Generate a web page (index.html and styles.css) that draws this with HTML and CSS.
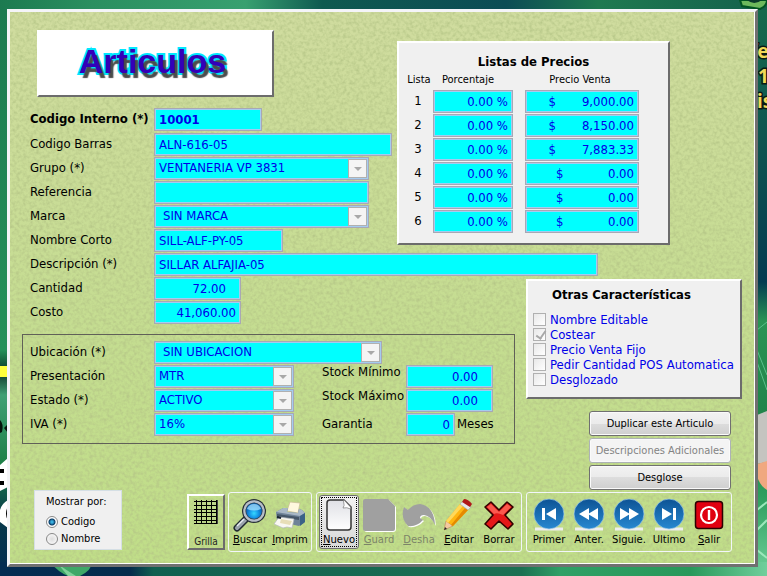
FILE: index.html
```html
<!DOCTYPE html>
<html lang="es">
<head>
<meta charset="utf-8">
<title>Articulos</title>
<link rel="stylesheet" href="styles.css">
</head>
<body>
<svg class="wallpaper" viewBox="0 0 767 576" preserveAspectRatio="none" aria-hidden="true">
  <defs>
    <linearGradient id="top" x1="0" x2="1"><stop offset="0" stop-color="#1c7a50"/><stop offset=".12" stop-color="#2a8f60"/><stop offset=".32" stop-color="#38a070"/><stop offset=".42" stop-color="#0f5a50"/><stop offset=".66" stop-color="#0c4c55"/><stop offset=".78" stop-color="#1f7a50"/><stop offset="1" stop-color="#14604c"/></linearGradient>
    <linearGradient id="left" x1="0" x2="0" y1="0" y2="1"><stop offset="0" stop-color="#1c7a50"/><stop offset=".6" stop-color="#25915a"/><stop offset=".64" stop-color="#0c3528"/><stop offset=".68" stop-color="#40a075"/><stop offset=".8" stop-color="#1f8048"/><stop offset=".9" stop-color="#06384a"/><stop offset="1" stop-color="#042c52"/></linearGradient>
    <linearGradient id="right" x1="0" x2="0" y1="0" y2="1"><stop offset="0" stop-color="#166a4c"/><stop offset=".2" stop-color="#0f5850"/><stop offset=".48" stop-color="#033a50"/><stop offset=".55" stop-color="#2a9455"/><stop offset=".75" stop-color="#1e8048"/><stop offset=".86" stop-color="#2f9f60"/><stop offset="1" stop-color="#6fd09a"/></linearGradient>
    <linearGradient id="bottom" x1="0" x2="1"><stop offset="0" stop-color="#042c52"/><stop offset=".17" stop-color="#052c4c"/><stop offset=".2" stop-color="#106050"/><stop offset=".68" stop-color="#1c7052"/><stop offset=".73" stop-color="#2fa066"/><stop offset=".9" stop-color="#28985a"/><stop offset="1" stop-color="#70cf9c"/></linearGradient>
  </defs>
  <rect width="767" height="576" fill="url(#top)"/>
  <rect y="10" width="10" height="566" fill="url(#left)"/>
  <rect x="750" y="10" width="17" height="566" fill="url(#right)"/>
  <rect y="562" width="767" height="14" fill="url(#bottom)"/>
  <path d="M50 562 H92 Q92 570 80 576 H68 Q58 572 50 562Z" fill="#3fa868"/>
  <path d="M58 564 Q66 570 76 576 H68Z" fill="#7fd09a"/>
  <path d="M740 0 L742 6 L760 9 Q767 6 767 0Z" fill="#6cb85c" stroke="#052" stroke-width="2"/>
  <path d="M747 0 Q754 6 762 0Z" fill="#0a3a2c"/>
  <rect y="366" width="10" height="11" fill="#ffff3c"/>
  <path d="M0 420 Q4 424 2 432 L0 433Z M4 428 L8 424 V433Z" fill="#05130c"/>
  <path d="M8 458 L0 465 V491 L8 487Z M8 500 Q-3 506 0 522 L8 528Z" fill="#fff"/>
  <path d="M0 469 H4 V473 H0Z M0 481 H4 V485 H0Z M8 506 Q4 514 8 521Z" fill="#000"/>
  <path d="M757 415 L767 411 V462 L757 464Z" fill="#c4c4c0"/>
  <path d="M757 464 L767 461 V490 Q760 486 757 476Z" fill="#f0a880"/>
  <path d="M757 350 L767 375 M757 362 L767 390 M757 330 L767 322" fill="none" stroke="#5cc08c"/>
  <path d="M757 510 L767 502 M757 530 L767 520 M757 550 L767 558" fill="none" stroke="#9be8bb" stroke-width="2"/>
  <g class="wallpaper-text"><text x="750" y="58">fe</text><text x="758" y="83">1</text><text x="757" y="108">is</text></g>
</svg>

<main class="window">
  <svg class="texture" aria-hidden="true">
    <filter id="paper" x="0" y="0" width="100%" height="100%">
      <feTurbulence type="fractalNoise" baseFrequency=".3" numOctaves="2" seed="7"/>
      <feColorMatrix values="0 0 0 0 .46  0 0 0 0 .56  0 0 0 0 .24  1.8 0 0 0 -.68"/>
    </filter>
    <rect width="100%" height="100%" filter="url(#paper)"/>
  </svg>

  <form class="content">
    <section class="upper">
      <div class="fields">
        <header class="title raised"><h1>Articulos</h1></header>
        <div class="row strong"><label for="codigo">Codigo Interno (*)</label><input id="codigo" class="box w-code" value="10001" readonly></div>
        <div class="row"><label for="barras">Codigo Barras</label><input id="barras" class="box w-bar" value="ALN-616-05" readonly></div>
        <div class="row"><label for="grupo">Grupo (*)</label><span class="pick w-group"><select id="grupo" class="box" disabled><option>VENTANERIA VP 3831</option></select></span></div>
        <div class="row"><label for="ref">Referencia</label><input id="ref" class="box w-group" value="" readonly></div>
        <div class="row"><label for="marca">Marca</label><span class="pick w-group"><select id="marca" class="box indent" disabled><option>SIN MARCA</option></select></span></div>
        <div class="row"><label for="corto">Nombre Corto</label><input id="corto" class="box w-short" value="SILL-ALF-PY-05" readonly></div>
      </div>
      <section class="prices raised">
        <h2>Listas de Precios</h2>
        <table>
          <thead><tr><th>Lista</th><th>Porcentaje</th><th>Precio Venta</th></tr></thead>
          <tbody>
            <tr><td>1</td><td><input class="box num" aria-label="Porcentaje 1" value="0.00 %" readonly></td><td><input class="box num" aria-label="Precio Venta 1" value="$       9,000.00" readonly></td></tr>
            <tr><td>2</td><td><input class="box num" aria-label="Porcentaje 2" value="0.00 %" readonly></td><td><input class="box num" aria-label="Precio Venta 2" value="$       8,150.00" readonly></td></tr>
            <tr><td>3</td><td><input class="box num" aria-label="Porcentaje 3" value="0.00 %" readonly></td><td><input class="box num" aria-label="Precio Venta 3" value="$       7,883.33" readonly></td></tr>
            <tr><td>4</td><td><input class="box num" aria-label="Porcentaje 4" value="0.00 %" readonly></td><td><input class="box num" aria-label="Precio Venta 4" value="$            0.00" readonly></td></tr>
            <tr><td>5</td><td><input class="box num" aria-label="Porcentaje 5" value="0.00 %" readonly></td><td><input class="box num" aria-label="Precio Venta 5" value="$            0.00" readonly></td></tr>
            <tr><td>6</td><td><input class="box num" aria-label="Porcentaje 6" value="0.00 %" readonly></td><td><input class="box num" aria-label="Precio Venta 6" value="$            0.00" readonly></td></tr>
          </tbody>
        </table>
      </section>
    </section>

    <div class="row inset"><label for="desc">Descripción (*)</label><input id="desc" class="box w-desc" value="SILLAR ALFAJIA-05" readonly></div>

    <section class="lower">
      <div class="lower-left">
        <div class="row inset"><label for="cant">Cantidad</label><input id="cant" class="box num spaced w-num" value="72.00" readonly></div>
        <div class="row inset"><label for="costo">Costo</label><input id="costo" class="box num w-num" value="41,060.00" readonly></div>
        <div class="frame">
          <div class="row"><label for="ubic">Ubicación (*)</label><span class="pick w-place"><select id="ubic" class="box indent" disabled><option>SIN UBICACION</option></select></span></div>
          <div class="frame-columns">
            <div>
              <div class="row"><label for="pres">Presentación</label><span class="pick w-pick"><select id="pres" class="box" disabled><option>MTR</option></select></span></div>
              <div class="row"><label for="estado">Estado (*)</label><span class="pick w-pick"><select id="estado" class="box" disabled><option>ACTIVO</option></select></span></div>
              <div class="row"><label for="iva">IVA (*)</label><span class="pick w-pick"><select id="iva" class="box" disabled><option>16%</option></select></span></div>
            </div>
            <div class="stock">
              <div class="row high"><label for="smin">Stock Mínimo</label><input id="smin" class="box num spaced w-num" value="0.00" readonly></div>
              <div class="row high"><label for="smax">Stock Máximo</label><input id="smax" class="box num spaced w-num" value="0.00" readonly></div>
              <div class="row"><label for="gar">Garantia</label><input id="gar" class="box num w-months" value="0" readonly><span class="unit">Meses</span></div>
            </div>
          </div>
        </div>
      </div>
      <div class="side">
        <section class="features raised">
          <h2>Otras Características</h2>
          <label><input type="checkbox" disabled>Nombre Editable</label>
          <label><input type="checkbox" checked disabled>Costear</label>
          <label><input type="checkbox" disabled>Precio Venta Fijo</label>
          <label><input type="checkbox" disabled>Pedir Cantidad POS Automatica</label>
          <label><input type="checkbox" disabled>Desglozado</label>
        </section>
        <div class="actions">
          <button type="button">Duplicar este Articulo</button>
          <button type="button" disabled>Descripciones Adicionales</button>
          <button type="button">Desglose</button>
        </div>
      </div>
    </section>

    <footer class="toolbar">
      <fieldset class="show-by">
        <legend>Mostrar por:</legend>
        <label><input type="radio" name="por" checked>Codigo</label>
        <label><input type="radio" name="por">Nombre</label>
      </fieldset>
      <button type="button" class="grid-button raised">
        <svg viewBox="0 0 24 24" width="24" height="24" shape-rendering="crispEdges"><path d="M0 1.5H24M0 5.5H24M0 9.5H24M0 12.5H24M0 16.5H24M0 20.5H24M0 23.5H24M2.5 0V24M7.5 0V24M12.5 0V24M17.5 0V24M22.5 0V24" stroke="#000"/><path d="M23.5 0V24" stroke="#444"/></svg>
        Grilla
      </button>
      <div class="group compact">
        <button type="button" class="tool">
          <svg viewBox="0 0 32 32"><defs><radialGradient id="lens" cx=".5" cy=".65"><stop offset="0" stop-color="#35d8ff"/><stop offset=".55" stop-color="#1698e8"/><stop offset="1" stop-color="#0966bb"/></radialGradient></defs><path d="M12 20 L3 29" stroke="#222a32" stroke-width="7" stroke-linecap="round"/><path d="M12 20 L3 29" stroke="#9aa3ac" stroke-width="4" stroke-linecap="round"/><path d="M10 20 L3 27" stroke="#e8edf2" stroke-width="1.5"/><circle cx="20" cy="12" r="12" fill="#252d36"/><circle cx="20" cy="12" r="10.8" fill="#b7bec8"/><circle cx="20" cy="12" r="8.6" fill="#32404e"/><circle cx="20" cy="12" r="7.8" fill="url(#lens)"/><path d="M13 10 Q15 5 20 5 Q25 5 27 10 Q20 13 13 10Z" fill="#a7e2ff" opacity=".75"/></svg>
          <span><u>B</u>uscar</span></button>
        <button type="button" class="tool">
          <svg viewBox="0 0 32 32"><path d="M13 12 L16 3 L26 4 L24 14Z" fill="#fff8de" stroke="#c9bc95" stroke-width=".7"/><path d="M2 13 L9 9 H14 L13 13 L24 14 L25 10 L28 11 L31 14 V23 L25 27 L3 22Z" fill="#6f8398"/><path d="M2 13 L9 9 H14 L13 13 L24 14 L25 10 L28 11 L31 14 L26 17Z" fill="#a9b8c6"/><path d="M26 17 L31 14 V23 L26 27Z" fill="#3b6287"/><path d="M3 15 L25 18 V21 L3 18Z" fill="#465769"/><path d="M5 18 L20 20 L18 29 L13 28 L9 29 L0 25Z" fill="#f9f8f2" stroke="#b5b9bb" stroke-width=".7"/><path d="M7 20 L18 22 L16 26 L6 24Z" fill="#e7deb7"/><path d="M3 18 L7 19" stroke="#1a2531" stroke-width="2"/></svg>
          <span><u>I</u>mprim</span></button>
      </div>
      <div class="group">
        <button type="button" class="tool focused">
          <svg viewBox="0 0 32 32"><defs><linearGradient id="sheet" x1="0" x2="0" y1="0" y2="1"><stop offset="0" stop-color="#dfe0e5"/><stop offset="1" stop-color="#fff"/></linearGradient></defs><path d="M7 1 H21 L28 8 V28 Q28 31 25 31 H7 Q4 31 4 28 V4 Q4 1 7 1Z" fill="url(#sheet)" stroke="#333" stroke-width="1.5"/><path d="M20.5 2 Q22 7 20 9 Q24 8 27.5 10 V8 L21 1Z" fill="#fff" stroke="#777" stroke-width=".7"/></svg>
          <span><u>N</u>uevo</span></button>
        <button type="button" class="tool" disabled>
          <svg viewBox="0 0 32 32"><path d="M3 1 H26 L33 8 V30 Q33 33 30 33 H4 Q1 33 1 30 V3Z" fill="#fff"/><path d="M2 0 H25 L32 7 V30 Q32 32 30 32 H2 Q0 32 0 30 V2 Q0 0 2 0Z" fill="#a0a0a0"/></svg>
          <span><u>G</u>uard</span></button>
        <button type="button" class="tool" disabled>
          <svg viewBox="0 0 32 32"><path d="M1 8 L5 11 Q10 5 17 5 Q31 7 32 26 Q28 17 21 16 Q17 16 17 19 L20 21 Q14 28 5 27 Q-3 19 1 8Z" fill="#fff" transform="translate(1 1)"/><path d="M1 8 L5 11 Q10 5 17 5 Q31 7 32 26 Q28 17 21 16 Q17 16 17 19 L20 21 Q14 28 5 27 Q-3 19 1 8Z" fill="#a0a0a0"/></svg>
          <span><u>D</u>esha</span></button>
        <button type="button" class="tool">
          <svg viewBox="0 0 32 32"><path d="M3 22 L1 31 L10 27Z" fill="#f4c9a0" stroke="#b88655" stroke-width=".6"/><path d="M2 28 L1 31 L4 30Z" fill="#222"/><path d="M3 22 L17 5 L25 11 L10 27Z" fill="#ffb511"/><path d="M3 22 L17 5 L20 7 L5 24Z" fill="#ffd85a"/><path d="M8 26 L22 9 L25 11 L10 27Z" fill="#e58a00"/><path d="M17 5 L20 2 L28 8 L25 11Z" fill="#e5e8ea" stroke="#9ba0a4" stroke-width=".5"/><path d="M19 3 L21 0 Q25 0 29 5 L27 8Z" fill="#b01818"/></svg>
          <span><u>E</u>ditar</span></button>
        <button type="button" class="tool">
          <svg viewBox="0 0 32 32"><path d="M8 3 L16 11 L24 3 L30 8 L22 16 L30 25 L25 30 L16 22 L8 30 L2 25 L10 16 L2 8Z" fill="#e51818" stroke="#300" stroke-width="1.6" stroke-linejoin="round"/><path d="M4 8 L8 5 L16 13 L24 5 L28 8 L20 16 Q14 13 11 15Z" fill="#ff6a5c" opacity=".8"/></svg>
          <span>Borrar</span></button>
      </div>
      <div class="group">
        <button type="button" class="tool">
          <svg viewBox="0 0 32 32"><defs><linearGradient id="disc" x1="0" x2="0" y1="0" y2="1"><stop offset="0" stop-color="#0d5395"/><stop offset="1" stop-color="#2788d0"/></linearGradient></defs><path d="M2 30 H30" stroke="#eee" stroke-width="3"/><circle cx="16" cy="15" r="15" fill="url(#disc)" stroke="#9fcaea" stroke-width=".7"/><path d="M9 9 H12 V21 H9Z M23 9 V21 L13 15Z" fill="#fff"/></svg>
          <span>Primer</span></button>
        <button type="button" class="tool">
          <svg viewBox="0 0 32 32"><path d="M2 30 H30" stroke="#eee" stroke-width="3"/><circle cx="16" cy="15" r="15" fill="url(#disc)" stroke="#9fcaea" stroke-width=".7"/><path d="M16 9 V21 L6 15Z M25 9 V21 L15 15Z" fill="#fff"/></svg>
          <span>Anter.</span></button>
        <button type="button" class="tool">
          <svg viewBox="0 0 32 32"><path d="M2 30 H30" stroke="#eee" stroke-width="3"/><circle cx="16" cy="15" r="15" fill="url(#disc)" stroke="#9fcaea" stroke-width=".7"/><path d="M7 9 V21 L17 15Z M16 9 V21 L26 15Z" fill="#fff"/></svg>
          <span>Siguie.</span></button>
        <button type="button" class="tool">
          <svg viewBox="0 0 32 32"><path d="M2 30 H30" stroke="#eee" stroke-width="3"/><circle cx="16" cy="15" r="15" fill="url(#disc)" stroke="#9fcaea" stroke-width=".7"/><path d="M9 9 V21 L19 15Z M20 9 H23 V21 H20Z" fill="#fff"/></svg>
          <span>Ultimo</span></button>
        <button type="button" class="tool">
          <svg viewBox="0 0 32 32"><rect x="2.5" y="2.5" width="27" height="27" rx="3" fill="#e00010" stroke="#2a0000" stroke-width="1.5"/><circle cx="16" cy="16" r="8" fill="none" stroke="#fff" stroke-width="2.2"/><path d="M16 11 V21" stroke="#fff" stroke-width="2.4"/></svg>
          <span><u>S</u>alir</span></button>
      </div>
    </footer>
  </form>
</main>
</body>
</html>
```
FILE: styles.css
```css
* { box-sizing: border-box; }

body {
  margin: 0;
  min-height: 100vh;
  padding: 9px 9px 9px 7px;
  display: flex;
  background: #14604c;
  color: #000;
  font: 13px/16px "DejaVu Sans Condensed", "DejaVu Sans", sans-serif;
}

h1, h2 { margin: 0; }

.wallpaper {
  position: absolute;
  inset: 0;
  width: 100%;
  height: 100%;
}

.wallpaper-text {
  font: bold 19px "Noto Sans", sans-serif;
  fill: #f0d858;
  stroke: #0a1a14;
  stroke-width: 3px;
  paint-order: stroke;
}

.window {
  position: relative;
  flex: 1;
  min-width: 0;
  display: flex;
  border: 3px solid;
  border-color: #f4f4f8 #707070 #707070 #f4f4f8;
  box-shadow: inset -1px -1px #fff;
  background: linear-gradient(#d0dc9f, #c4dd90 60%, #c0de88);
}

.texture {
  position: absolute;
  inset: 0;
  width: calc(100% - 1px);
  height: calc(100% - 1px);
}

.content {
  position: relative;
  flex: 1;
  min-width: 0;
  padding: 18px 12px 0;
}

.raised {
  border: 2px solid;
  border-color: #fff #6c6c6c #6c6c6c #fff;
  background: #f0f0f0;
}

.upper {
  display: flex;
  align-items: flex-start;
  padding-left: 8px;
}

.fields { width: 367px; }

.title {
  width: 237px;
  height: 67px;
  margin: 0 0 9px 7px;
  padding: 0 6px 6px 0;
  display: flex;
  align-items: center;
  justify-content: center;
  background: #fff;
}

h1 {
  font: bold 34px/40px "Liberation Sans", sans-serif;
  color: #3400b8;
  -webkit-text-stroke: 4px #00e8ff;
  paint-order: stroke fill;
  text-shadow: 3px 5px 1px #4c4c4c;
}

.row {
  display: flex;
  align-items: center;
  height: 24px;
}

.row > label {
  flex: 0 0 124px;
  white-space: nowrap;
}

.row.inset { padding-left: 8px; }
.row.high > label { align-self: flex-start; }

.row.strong { height: 26px; }
.row.strong, .row.strong .box { font-weight: bold; }

.box {
  display: block;
  width: 100%;
  height: 23px;
  margin: 0;
  padding: 0 4px;
  border: 1px solid #a8a8b4;
  border-radius: 0;
  outline: 0;
  box-shadow: inset 0 0 0 1px #a4ccf0;
  background: #0ff;
  color: #0000e8;
  opacity: 1;
  font: inherit;
  appearance: none;
}

select.indent { padding-left: 8px; }

.num { text-align: right; }
input.spaced { padding-right: 14px; }

.pick {
  position: relative;
  display: block;
}

.pick::before {
  content: "";
  position: absolute;
  top: 2px;
  right: 2px;
  bottom: 2px;
  width: 17px;
  border: 1px solid #b0b0b0;
  background: #f4f4f4;
}

.pick::after {
  content: "";
  position: absolute;
  top: 10px;
  right: 7px;
  border: 4px solid transparent;
  border-top-color: #a8a8a8;
  border-bottom: 0;
}

.w-code { width: 108px; }
.w-bar { width: 238px; }
.w-group { width: 215px; }
.w-short { width: 129px; }
.w-desc { width: 444px; }
.w-num { width: 87px; }
.w-place { width: 228px; }
.w-pick { width: 140px; }
.w-months { width: 49px; }

.prices {
  width: 273px;
  margin-top: 11px;
  padding: 10px 0 10px;
}

h2 {
  font: bold 13px/18px "DejaVu Sans Condensed", sans-serif;
  text-align: center;
}

table {
  border-collapse: collapse;
  table-layout: fixed;
  width: 240px;
}

th {
  height: 18px;
  padding: 0;
  font-size: 11px;
  line-height: 14px;
  font-weight: normal;
}

th:nth-child(1) { width: 34px; padding-left: 6px; }
th:nth-child(2) { width: 80px; padding-right: 10px; }
th:nth-child(3) { padding-left: 8px; }

td {
  height: 24px;
  padding: 0;
}

td:first-child { padding-left: 4px; text-align: center; }
td:last-child { padding-left: 12px; }

.lower {
  display: flex;
  align-items: flex-start;
}

.lower-left { width: 493px; }

.frame {
  margin-top: 10px;
  padding: 5px 0 7px 7px;
  border: 1px solid #606058;
}

.frame-columns { display: flex; }

.stock {
  margin-left: 28px;
  white-space: nowrap;
}

.stock .row > label { flex-basis: 84px; }
.unit { margin-left: 2px; }

.side {
  width: 216px;
  margin: 3px 0 0 11px;
}

.features {
  height: 120px;
  padding: 5px 0 0 5px;
  color: #0000e8;
}

.features h2 {
  margin: 0 30px 8px 0;
  color: #000;
}

.features label {
  display: flex;
  align-items: center;
  gap: 4px;
  height: 15px;
  white-space: nowrap;
}

.features input {
  appearance: none;
  flex: none;
  width: 13px;
  height: 13px;
  margin: 0;
  border: 1px solid #b0b0b0;
  background: linear-gradient(135deg, #e8e8e8, #fff);
}

.features input:checked::before {
  content: "";
  display: block;
  width: 4px;
  height: 8px;
  margin: 0 0 0 4px;
  border: solid #a8a8a8;
  border-width: 0 2px 2px 0;
  transform: rotate(35deg);
}

.actions {
  display: flex;
  flex-direction: column;
  gap: 2px;
  margin: 12px 11px 0 63px;
}

.actions button {
  height: 25px;
  padding: 0;
  border: 1px solid #707070;
  border-radius: 3px;
  box-shadow: inset 0 0 0 1px #fafafa;
  background: linear-gradient(#f2f2f2, #ebebeb 50%, #dddddd 50%, #cfcfcf);
  color: #000;
  font: 11px/16px "DejaVu Sans Condensed", sans-serif;
  white-space: nowrap;
}

.actions button:disabled {
  border-color: #adb2b5;
  background: #f4f4f4;
  color: #838383;
}

.toolbar {
  display: flex;
  align-items: flex-start;
  padding: 0 0 0 12px;
}

.show-by {
  width: 88px;
  height: 60px;
  margin: 0 65px 0 0;
  padding: 3px 0 0 11px;
  border: 1px solid #d5dfe5;
  background: #f0f0f0;
  font-size: 11px;
  white-space: nowrap;
}

.show-by legend {
  float: left;
  width: 100%;
  height: 19px;
  padding: 0;
}

.show-by label {
  display: flex;
  clear: both;
  align-items: center;
  gap: 3px;
  height: 17px;
}

.show-by input {
  appearance: none;
  width: 12px;
  height: 12px;
  margin: 0;
  border: 1px solid #888;
  border-radius: 50%;
  background: radial-gradient(#ddd, #fff);
}

.show-by input:checked {
  background: radial-gradient(circle, #38b0e0 0 1px, #0a3c68 3px, #fff 4px);
}

.grid-button {
  width: 38px;
  height: 56px;
  margin: 4px 3px 0 0;
  padding: 3px 0 0;
  background: none;
  color: #222;
  font: 10px/12px "DejaVu Sans Condensed", sans-serif;
}

.grid-button svg {
  display: block;
  margin: 0 auto 12px;
}

.group {
  display: flex;
  height: 60px;
  margin: 2px 4px 0 0;
  padding: 2px;
  border: 1px solid #f2f6fa;
  border-radius: 3px;
}

.group.compact { padding: 2px 1px; }
.group:last-child { margin-right: 0; }

.tool {
  width: 40px;
  height: 54px;
  padding: 3px 0 0;
  border: 1px solid transparent;
  background: none;
  color: #000;
  font: 10px/14px "DejaVu Sans", sans-serif;
  display: flex;
  flex-direction: column;
  align-items: center;
  gap: 2px;
}

.tool svg {
  display: block;
  width: 32px;
  height: 32px;
  overflow: visible;
}

.tool:disabled { color: #7c8468; }

.tool.focused {
  border-color: #707070;
  border-radius: 3px;
  outline: 1px dotted #000;
  outline-offset: -3px;
  background: linear-gradient(#f2f2f2, #d8d8d8);
}
```
